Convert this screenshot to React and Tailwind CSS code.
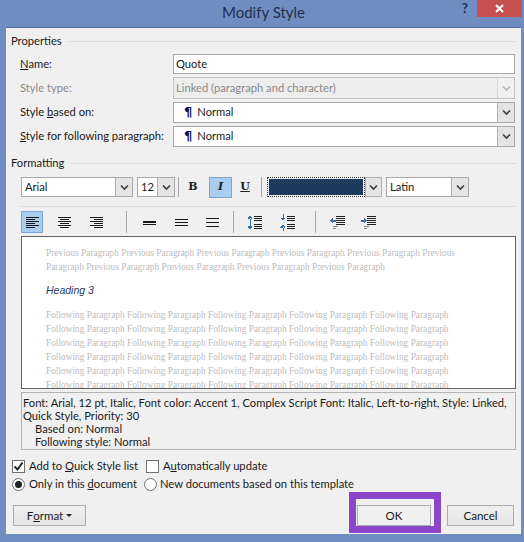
import React from "react";

const Chevron = ({ color = "#404040" }) => (
  <svg width="9" height="7" viewBox="0 0 9 7" fill="none">
    <path d="M1 1.5 L4.5 5 L8 1.5" stroke={color} strokeWidth="1.7" />
  </svg>
);

const DropButton = ({ disabled }) => (
  <div
    className={
      disabled
        ? "w-[17px] h-full flex items-center justify-center bg-[#f0f0f0] border-l border-[#d8d8d8]"
        : "w-[17px] h-full flex items-center justify-center bg-[#e4e4e4] border-l border-[#b0b0b0]"
    }
  >
    <Chevron color={disabled ? "#b8b8b8" : "#404040"} />
  </div>
);

const Pilcrow = () => <span className="font-['DejaVu_Sans',sans-serif] font-bold text-[#0c0c50] text-[13px] leading-[13px] mr-[5px] ml-[10px]">¶</span>;

const SectionTitle = ({ children, className }) => (
  <div className={"flex items-center h-[16px] " + className}>
    <span className="text-[11.2px] text-[#1a1a1a] mr-[7px]">{children}</span>
    <div className="flex-1 h-px bg-[#dcdcdc] mr-[5px]"></div>
  </div>
);

const FieldRow = ({ label, className, children }) => (
  <div className={"flex items-center " + className}>
    <div className="w-[153px] ml-[14px] text-[11.2px] text-[#1a1a1a] whitespace-nowrap">{label}</div>
    {children}
  </div>
);

const Lines = ({ n }) => (
  <svg width="15" height="13" viewBox="0 0 15 13" stroke="#1a1a1a" strokeWidth="1" shapeRendering="crispEdges">
    {n}
  </svg>
);

const AlignIcon = ({ rows }) => (
  <Lines
    n={rows.map((r, i) => (
      <line key={i} x1={r[0]} x2={r[1]} y1={i * 2 + 1.5} y2={i * 2 + 1.5} />
    ))}
  />
);

const SpacingIcon = ({ rows }) => (
  <Lines
    n={rows.map((y, i) => (
      <line key={i} x1="1" x2="14" y1={y} y2={y} />
    ))}
  />
);

const LineSpace = ({ inward }) => (
  <svg width="15" height="17" viewBox="0 0 15 17" fill="none" shapeRendering="crispEdges">
    {[2, 4, 6, 10, 12, 14].map((y) => (
      <line key={y} x1="7" x2="15" y1={y + 0.5} y2={y + 0.5} stroke="#222" />
    ))}
    {inward ? (
      <path d="M3 7 L0.5 3.5 H5.5 Z M3 10 L0.5 13.5 H5.5 Z M2.5 0 H3.5 V4 H2.5 Z M2.5 13 H3.5 V17 H2.5 Z" fill="#3a6ea5" />
    ) : (
      <path d="M3 1 L0.5 5 H5.5 Z M3 16 L0.5 12 H5.5 Z M2.5 4 H3.5 V13 H2.5 Z" fill="#3a6ea5" />
    )}
  </svg>
);

const IndentIcon = ({ right }) => (
  <svg width="16" height="15" viewBox="0 0 16 15" fill="none" shapeRendering="crispEdges">
    {[1, 3, 5, 7, 9].map((y) => (
      <line key={y} x1="6" x2="15" y1={y + 0.5} y2={y + 0.5} stroke="#222" />
    ))}
    <line x1="3" x2="8" y1="11.5" y2="11.5" stroke="#888" />
    <line x1="3" x2="6" y1="13.5" y2="13.5" stroke="#888" />
    {right ? (
      <path d="M0 4.5 H3 V3 L5.5 5.5 L3 8 V6.5 H0 Z" fill="#3a6ea5" />
    ) : (
      <path d="M5.5 4.5 H2.5 V3 L0 5.5 L2.5 8 V6.5 H5.5 Z" fill="#3a6ea5" />
    )}
  </svg>
);

const Sep = ({ className }) => <div className={"w-px bg-[#a8a8a8] " + className}></div>;

const Btn = ({ children, className }) => (
  <div
    className={
      "h-[21px] flex items-center justify-center border border-[#acacac] bg-gradient-to-b from-[#f0f0f0] to-[#e5e5e5] text-[11.5px] text-[#1a1a1a] " +
      className
    }
  >
    {children}
  </div>
);

const U = ({ children }) => <span className="underline">{children}</span>;

const prev = "Previous Paragraph Previous Paragraph Previous Paragraph Previous Paragraph Previous Paragraph Previous";
const prev2 = "Paragraph Previous Paragraph Previous Paragraph Previous Paragraph Previous Paragraph";
const foll = "Following Paragraph Following Paragraph Following Paragraph Following Paragraph Following Paragraph";

export default function App() {
  return (
    <div className="w-[524px] h-[542px] bg-[#6f8dc0] overflow-hidden flex flex-col font-['Lato',sans-serif]">
      {/* title bar */}
      <div className="h-[27px] flex shrink-0">
        <div className="flex-1 pl-[222px] pt-[2px] text-[15px] leading-[20px] text-[#22304f] whitespace-nowrap">Modify Style</div>
        <div className="w-[15px] mr-[1px] pl-[1px] text-[13px] leading-[16px] font-bold text-[#1d2b4a]">?</div>
        <div className="w-[45px] h-[17px] mr-[2px] bg-[#c75050] flex items-center justify-center">
          <svg width="9" height="9" viewBox="0 0 9 9">
            <path d="M1 1 L8 8 M8 1 L1 8" stroke="#fff" strokeWidth="2" />
          </svg>
        </div>
      </div>

      {/* dialog */}
      <div className="ml-[6px] w-[515px] h-[507px] bg-[#f0f0f0] shrink-0 border-t border-[#56709e]">
        <SectionTitle className="mt-[5px] ml-[5px]">Properties</SectionTitle>

        <FieldRow label={<><U>N</U>ame:</>} className="mt-[5px] h-[20px]">
          <div className="w-[342px] h-full bg-white border border-[#a9a9a9] pl-[2px] text-[11.2px] leading-[18px] text-[#1a1a1a]">Quote</div>
        </FieldRow>
        <FieldRow label={<span className="text-[#8a8a8a]">Style type:</span>} className="mt-[3px] h-[22px]">
          <div className="w-[342px] h-full bg-[#ededed] border border-[#c4c4c4] flex items-center justify-between pl-[2px] text-[11.2px] text-[#8a8a8a]">
            Linked (paragraph and character)
            <DropButton disabled />
          </div>
        </FieldRow>
        <FieldRow label={<>Style <U>b</U>ased on:</>} className="mt-[3px] h-[21px]">
          <div className="w-[342px] h-full bg-white border border-[#a9a9a9] flex items-center justify-between text-[11.2px] text-[#1a1a1a]">
            <span><Pilcrow />Normal</span>
            <DropButton />
          </div>
        </FieldRow>
        <FieldRow label={<><U>S</U>tyle for following paragraph:</>} className="mt-[3px] h-[21px]">
          <div className="w-[342px] h-full bg-white border border-[#a9a9a9] flex items-center justify-between text-[11.2px] text-[#1a1a1a]">
            <span><Pilcrow />Normal</span>
            <DropButton />
          </div>
        </FieldRow>

        <SectionTitle className="mt-[8px] ml-[5px]">Formatting</SectionTitle>

        {/* font toolbar */}
        <div className="mt-[6px] ml-[15px] h-[20px] flex items-center">
          <div className="w-[112px] h-full bg-white border border-[#a9a9a9] flex items-center justify-between pl-[3px] text-[11.2px] text-[#1a1a1a]">
            Arial
            <DropButton />
          </div>
          <div className="w-[38px] ml-[4px] h-full bg-white border border-[#a9a9a9] flex items-center justify-between pl-[3px] text-[11.2px] text-[#1a1a1a]">
            12
            <DropButton />
          </div>
          <Sep className="ml-[3px] h-[20px]" />
          <div className="w-[22px] h-[21px] ml-[3px] flex items-center justify-center font-['DejaVu_Serif',serif] font-bold text-[11px] text-[#222]">B</div>
          <div className="w-[23px] h-[21px] ml-[5px] flex items-center justify-center bg-[#a9cdf0] border border-[#7da7d1] font-['DejaVu_Serif',serif] italic font-bold text-[11px] text-[#222]">I</div>
          <div className="w-[22px] h-[21px] ml-[2px] flex items-center justify-center font-['DejaVu_Serif',serif] font-bold underline text-[11px] text-[#222]">U</div>
          <Sep className="ml-[5px] h-[20px]" />
          <div className="ml-[5px] w-[98px] h-[20px] flex items-center border border-dotted border-[#333] p-[1px]">
            <div className="w-full h-full bg-[#1f3a5f]"></div>
          </div>
          <div className="w-[17px] h-[20px] bg-[#e4e4e4] border border-[#b0b0b0] flex items-center justify-center">
            <Chevron />
          </div>
          <div className="w-[83px] ml-[4px] h-full bg-white border border-[#a9a9a9] flex items-center justify-between pl-[3px] text-[11.2px] text-[#1a1a1a]">
            Latin
            <DropButton />
          </div>
        </div>

        <div className="mt-[9px] ml-[15px] mr-[5px] h-px bg-[#dcdcdc]"></div>

        {/* paragraph toolbar */}
        <div className="mt-[4px] ml-[15px] h-[22px] flex items-center">
          <div className="w-[22px] h-[22px] flex items-center justify-center bg-[#a9cdf0] border border-[#7da7d1]">
            <AlignIcon rows={[[1, 14], [1, 10], [1, 14], [1, 10], [1, 14], [1, 10]]} />
          </div>
          <div className="w-[43px] h-[22px] flex items-center justify-center">
            <AlignIcon rows={[[1, 14], [3, 12], [1, 14], [3, 12], [1, 14], [3, 12]]} />
          </div>
          <div className="w-[21px] h-[22px] flex items-center justify-center">
            <AlignIcon rows={[[1, 14], [5, 14], [1, 14], [5, 14], [1, 14], [5, 14]]} />
          </div>
          <Sep className="ml-[19px] h-[22px]" />
          <div className="w-[44px] h-[22px] flex items-center justify-center">
            <SpacingIcon rows={[5.5, 6.5, 8.5]} />
          </div>
          <div className="w-[20px] h-[22px] flex items-center justify-center">
            <SpacingIcon rows={[3.5, 6.5, 9.5]} />
          </div>
          <div className="w-[42px] h-[22px] flex items-center justify-center">
            <SpacingIcon rows={[2.5, 6.5, 10.5]} />
          </div>
          <Sep className="h-[22px]" />
          <div className="w-[41px] h-[22px] flex items-center justify-center">
            <LineSpace />
          </div>
          <div className="w-[25px] h-[22px] flex items-center justify-center">
            <LineSpace inward />
          </div>
          <Sep className="ml-[15px] h-[22px]" />
          <div className="w-[44px] h-[22px] flex items-center justify-center">
            <IndentIcon />
          </div>
          <div className="w-[18px] h-[22px] flex items-center justify-center">
            <IndentIcon right />
          </div>
        </div>

        {/* preview */}
        <div className="mt-[3px] ml-[15px] w-[495px] h-[153px] bg-white border border-[#646464] overflow-hidden pl-[24px] pt-[9px] font-['Liberation_Serif',serif] text-[9.35px] leading-[14px] text-[#bdbdbd] whitespace-nowrap">
          <div>{prev}</div>
          <div>{prev2}</div>
          <div className="mt-[9px] h-[14px] font-['Liberation_Sans',sans-serif] italic text-[10.5px] text-[#1f3a5f]">Heading 3</div>
          <div className="mt-[11px]">{foll}</div>
          <div>{foll}</div>
          <div>{foll}</div>
          <div>{foll}</div>
          <div>{foll}</div>
          <div>{foll}</div>
        </div>

        {/* description */}
        <div className="mt-[3px] ml-[15px] w-[495px] h-[58px] border border-[#b4b4b4] pl-[1px] pt-[3px] text-[11.2px] leading-[13px] text-[#1a1a1a]">
          <div className="whitespace-nowrap">Font: Arial, 12 pt, Italic, Font color: Accent 1, Complex Script Font: Italic, Left-to-right, Style: Linked,</div>
          <div>Quick Style, Priority: 30</div>
          <div className="pl-[12px]">Based on: Normal</div>
          <div className="pl-[12px]">Following style: Normal</div>
        </div>

        {/* options */}
        <div className="mt-[8px] ml-[6px] h-[16px] flex items-center text-[11.2px] text-[#1a1a1a]">
          <div className="w-[13px] h-[13px] bg-white border border-[#707070] flex items-center justify-center">
            <svg width="11" height="11" viewBox="0 0 11 11">
              <path d="M1.5 5.5 L4.5 8.5 L9.5 1.5" stroke="#222" strokeWidth="2" fill="none" />
            </svg>
          </div>
          <span className="ml-[4px] w-[117px] whitespace-nowrap">Add to <U>Q</U>uick Style list</span>
          <div className="w-[13px] h-[13px] bg-white border border-[#707070]"></div>
          <span className="ml-[4px] whitespace-nowrap">A<U>u</U>tomatically update</span>
        </div>
        <div className="mt-[2px] ml-[6px] h-[16px] flex items-center text-[11.2px] text-[#1a1a1a]">
          <div className="w-[13px] h-[13px] rounded-full bg-white border border-[#707070] flex items-center justify-center">
            <div className="w-[7px] h-[7px] rounded-full bg-[#222]"></div>
          </div>
          <span className="ml-[4px] w-[115px] whitespace-nowrap">Only in this <U>d</U>ocument</span>
          <div className="w-[13px] h-[13px] rounded-full bg-white border border-[#707070]"></div>
          <span className="ml-[3px] whitespace-nowrap">New documents based on this template</span>
        </div>

        {/* buttons */}
        <div className="mt-[13px] ml-[7px] flex">
          <Btn className="w-[73px]">
            F<U>o</U>rmat
            <svg className="ml-[3px]" width="6" height="3" viewBox="0 0 6 3"><path d="M0 0 H6 L3 3 Z" fill="#222" /></svg>
          </Btn>
          <div className="relative ml-[271px] w-[74px]">
            <Btn className="w-[74px] bg-none bg-[#f0f0f0]">OK</Btn>
            <div className="absolute -left-[8px] -right-[10px] -top-[13px] -bottom-[7px] border-[7px] border-[#8a45c8]"></div>
          </div>
          <Btn className="ml-[16px] w-[67px]">Cancel</Btn>
        </div>
      </div>
    </div>
  );
}
